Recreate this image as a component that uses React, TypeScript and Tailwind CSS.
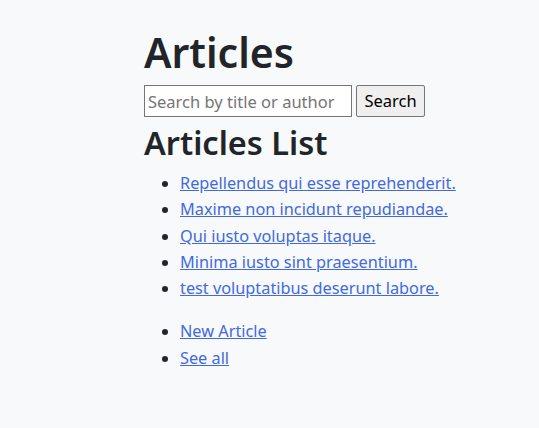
import React from "react";

const articles = [
  "Repellendus qui esse reprehenderit.",
  "Maxime non incidunt repudiandae.",
  "Qui iusto voluptas itaque.",
  "Minima iusto sint praesentium.",
  "test voluptatibus deserunt labore.",
];

export default function App() {
  return (
    <div
      className="min-h-[428px] w-full bg-[#f8f9fa] text-[#212529]"
      style={{ fontFamily: '"Noto Sans", "Open Sans", sans-serif' }}
    >
      <div className="pl-[144px] pt-[24px]">
        <h1 className="text-[41px] font-semibold leading-[56px] m-0">Articles</h1>
        <form className="mt-[5px] flex gap-[4px]" onSubmit={(e) => e.preventDefault()}>
          <input
            type="text"
            placeholder="Search by title or author"
            className="h-[32px] w-[208px] border border-[#767676] bg-white px-[3px] text-[16.5px] placeholder:text-[#757575] outline-none"
          />
          <button
            type="submit"
            className="h-[32px] w-[69px] rounded-[2px] border border-[#767676] bg-[#efefef] text-[16.5px] text-black"
          >
            Search
          </button>
        </form>
        <h2 className="text-[32.5px] font-semibold leading-[44px] mt-[4px]">Articles List</h2>
        <ul className="list-disc pl-[36px] mt-[5px] text-[16.3px] leading-[26.3px]">
          {articles.map((a) => (
            <li key={a}>
              <a href="#" className="text-[#4169e1] underline">
                {a}
              </a>
            </li>
          ))}
        </ul>
        <ul className="list-disc pl-[36px] mt-[17px] text-[16.3px] leading-[26.3px]">
          <li>
            <a href="#" className="text-[#4169e1] underline">New Article</a>
          </li>
          <li>
            <a href="#" className="text-[#4169e1] underline">See all</a>
          </li>
        </ul>
      </div>
    </div>
  );
}
